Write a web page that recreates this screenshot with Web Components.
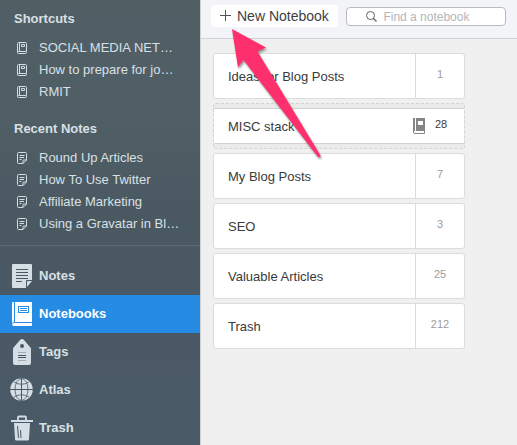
<!DOCTYPE html>
<html lang="en">
<head>
<meta charset="utf-8">
<title>Notebooks</title>
<style>
  body {
    margin: 0;
    font-family: "Liberation Sans", Arial, sans-serif;
    font-size: 13px;
  }
</style>
</head>
<body>
<notes-app>
  <side-bar slot="sidebar">
    <side-section heading="Shortcuts">
      <side-link icon="book">SOCIAL MEDIA NET…</side-link>
      <side-link icon="book">How to prepare for jo…</side-link>
      <side-link icon="book">RMIT</side-link>
    </side-section>
    <side-section heading="Recent Notes">
      <side-link icon="note">Round Up Articles</side-link>
      <side-link icon="note">How To Use Twitter</side-link>
      <side-link icon="note">Affiliate Marketing</side-link>
      <side-link icon="note">Using a Gravatar in Bl…</side-link>
    </side-section>
    <nav-item slot="nav" icon="notes">Notes</nav-item>
    <nav-item slot="nav" icon="notebooks" active>Notebooks</nav-item>
    <nav-item slot="nav" icon="tags">Tags</nav-item>
    <nav-item slot="nav" icon="atlas">Atlas</nav-item>
    <nav-item slot="nav" icon="trash">Trash</nav-item>
  </side-bar>
  <tool-bar placeholder="Find a notebook">New Notebook</tool-bar>
  <notebook-list>
    <notebook-card count="1">Ideas for Blog Posts</notebook-card>
    <notebook-stack count="28">MISC stack</notebook-stack>
    <notebook-card count="7">My Blog Posts</notebook-card>
    <notebook-card count="3">SEO</notebook-card>
    <notebook-card count="25">Valuable Articles</notebook-card>
    <notebook-card count="212">Trash</notebook-card>
  </notebook-list>
  <pointer-arrow slot="overlay"></pointer-arrow>
</notes-app>

<script>
const smallIcons = {
  book: `
    <svg width="10" height="12" viewBox="0 0 10 12" fill="none" stroke="#d3dce2">
      <path d="M9.500 9V1.500q0-1-1-1h-7q-1 0-1 1v9q0 1 1 1h7q1 0 1-1V9.500H1.500q-1 0-1 1M2.500 .5v9"/>
      <path d="M4.500 2.500h3v2h-3z"/>
    </svg>`,
  note: `
    <svg width="10" height="12" viewBox="0 0 10 12" fill="none" stroke="#d3dce2">
      <path d="M6 11.500H1.500q-1 0-1-1v-9q0-1 1-1h7q1 0 1 1V8L6 11.500V8.500q0-.5.5-.5h3"/>
      <path d="M2.500 3.500h5M2.500 5.500h4.500M2.500 7.500h2"/>
    </svg>`
};

const navIcons = {
  notes: `
    <svg width="24" height="26" viewBox="0 0 24 26">
      <path d="M3 1h18q1 0 1 1v15h-5q-1 0-1 1v7H3q-1 0-1-1V2q0-1 1-1z" fill="#d5dee4"/>
      <path d="M17 24v-5q0-1 1-1h4z" fill="#d5dee4"/>
      <path d="M6 6.500h12M6 9.500h12M6 12.500h12M6 15.500h12M6 18.500h6" stroke="#4a5862"/>
    </svg>`,
  notebooks: `
    <svg width="24" height="26" viewBox="0 0 24 26">
      <path d="M3 1h18q1 0 1 1v22q0 1-1 1H4q-2 0-2-2V2q0-1 1-1z" fill="#fff"/>
      <path d="M4.500 1v20.500M2 22.500q1-1 2.500-1H22" fill="none" stroke="#268be3"/>
      <rect x="8.500" y="5.500" width="10" height="6" fill="#fff" stroke="#268be3"/>
      <path d="M10 7.500h7M10 9.500h7" stroke="#268be3"/>
    </svg>`,
  tags: `
    <svg width="24" height="26" viewBox="0 0 24 26">
      <path d="M12 0q1 0 2 1l6 7q1 1 1 2v14q0 2-2 2H5q-2 0-2-2V10q0-1 1-2l6-7q1-1 2-1z" fill="#d5dee4"/>
      <circle cx="12" cy="7" r="2" fill="#4a5862"/>
      <path d="M8 13.500h8M8 21.500h8" stroke="#a0adb6"/>
      <path d="M8 16.500h8M8 18.500h8" stroke="#4a5862"/>
    </svg>`,
  atlas: `
    <svg width="24" height="26" viewBox="0 0 24 26" fill="none">
      <circle cx="11.500" cy="12.500" r="11.300" fill="#d5dee4"/>
      <g stroke="#4a5862">
        <path d="M11.500 1v23M0 12.500h23"/>
        <path d="M4 5q7.500 4.500 15 0M4 20q7.500-4.500 15 0" stroke-width=".8"/>
        <ellipse cx="11.500" cy="12.500" rx="6.500" ry="11" stroke-width=".8"/>
      </g>
    </svg>`,
  trash: `
    <svg width="24" height="26" viewBox="0 0 24 26">
      <path d="M8 5V2.500q0-1 1-1h6q1 0 1 1V5" fill="none" stroke="#d5dee4" stroke-width="1.800"/>
      <path d="M1 5h22v2H1zM4 8h16l-1 16q0 1.500-1.500 1.500h-11Q5 25.500 5 24z" fill="#d5dee4"/>
      <path d="M7.500 11l1 12M10.500 15l.5 8" stroke="#4a5862"/>
    </svg>`
};

class NotesApp extends HTMLElement {
  constructor() {
    super();
    this.attachShadow({ mode: "open" });
  }

  connectedCallback() {
    this.shadowRoot.innerHTML = `
      <style>
        :host {
          display: grid;
          grid-template-columns: 200px 1fr;
          height: 100vh;
        }

        main {
          position: relative;
          min-width: 0;
          border-left: 1px solid #cfd0d2;
          background: #f0f0f0;
        }
      </style>
      <slot name="sidebar"></slot>
      <main>
        <slot></slot>
        <slot name="overlay"></slot>
      </main>
    `;
  }
}

class SideBar extends HTMLElement {
  constructor() {
    super();
    this.attachShadow({ mode: "open" });
  }

  connectedCallback() {
    this.shadowRoot.innerHTML = `
      <style>
        :host {
          display: block;
          overflow: hidden;
          background: linear-gradient(#515f65, #505e65 25%, #4a5862 50%, #4a5a67);
          color: #d8e0e5;
        }

        .sections {
          display: grid;
          gap: 15px;
          padding: 8px 0 10px;
        }

        nav {
          padding-top: 11px;
          border-top: 1px solid #5d6a73;
        }
      </style>
      <div class="sections"><slot></slot></div>
      <nav><slot name="nav"></slot></nav>
    `;
  }
}

class SideSection extends HTMLElement {
  constructor() {
    super();
    this.attachShadow({ mode: "open" });
  }

  connectedCallback() {
    this.shadowRoot.innerHTML = `
      <style>
        :host {
          display: block;
        }

        h2 {
          margin: 0 0 7px;
          padding: 0 14px;
          font-size: 13px;
          line-height: 22px;
        }
      </style>
      <h2>${this.getAttribute("heading")}</h2>
      <slot></slot>
    `;
  }
}

class SideLink extends HTMLElement {
  constructor() {
    super();
    this.attachShadow({ mode: "open" });
  }

  connectedCallback() {
    this.shadowRoot.innerHTML = `
      <style>
        :host {
          display: block;
        }

        a {
          display: flex;
          align-items: center;
          gap: 12px;
          padding-left: 17px;
          color: inherit;
          line-height: 22px;
          text-decoration: none;
          white-space: nowrap;
        }
      </style>
      <a href="#">${smallIcons[this.getAttribute("icon")]}<span><slot></slot></span></a>
    `;
  }
}

class NavItem extends HTMLElement {
  constructor() {
    super();
    this.attachShadow({ mode: "open" });
  }

  connectedCallback() {
    this.shadowRoot.innerHTML = `
      <style>
        :host {
          display: block;
        }

        a {
          display: flex;
          align-items: center;
          gap: 5px;
          padding-left: 10px;
          color: inherit;
          font-weight: bold;
          line-height: 38px;
          text-decoration: none;
        }

        :host([active]) a {
          background: #268be3;
          color: #fff;
        }
      </style>
      <a href="#">${navIcons[this.getAttribute("icon")]}<span><slot></slot></span></a>
    `;
  }
}

class ToolBar extends HTMLElement {
  constructor() {
    super();
    this.attachShadow({ mode: "open" });
  }

  connectedCallback() {
    const placeholder = this.getAttribute("placeholder");
    this.shadowRoot.innerHTML = `
      <style>
        :host {
          display: flex;
          align-items: flex-start;
          gap: 8px;
          padding: 5px 11px 11px 10px;
          border-bottom: 1px solid #d0d1d3;
          background: #f2f4f8;
        }

        button {
          display: flex;
          align-items: center;
          gap: 6px;
          height: 22px;
          padding: 0 9px;
          border: 0;
          border-radius: 4px;
          background: #fff;
          color: #3c3f42;
          font: 14px "Liberation Sans", Arial, sans-serif;
          white-space: nowrap;
        }

        label {
          display: flex;
          flex: 1;
          align-items: center;
          justify-content: center;
          gap: 6px;
          min-width: 0;
          height: 17px;
          margin-top: 2px;
          border: 1px solid #b9bbbe;
          border-radius: 4px;
          background: #fff;
        }

        input {
          width: 102px;
          min-width: 0;
          padding: 0;
          border: 0;
          outline: 0;
          background: none;
          font: 12px "Liberation Sans", Arial, sans-serif;
        }

        input::placeholder {
          color: #b4b6b9;
        }
      </style>
      <button type="button">
        <svg width="11" height="12" viewBox="0 0 11 12" stroke="#505357">
          <path d="M5.500 0v11M0 5.500h11"/>
        </svg>
        <slot></slot>
      </button>
      <label>
        <svg width="11" height="11" viewBox="0 0 11 11" fill="none" stroke="#5c5f63">
          <circle cx="4.500" cy="4.500" r="4"/>
          <path d="M7.500 7.500l3 3" stroke-width="1.300"/>
        </svg>
        <input type="text" placeholder="${placeholder}" aria-label="${placeholder}">
      </label>
    `;
  }
}

class NotebookList extends HTMLElement {
  constructor() {
    super();
    this.attachShadow({ mode: "open" });
  }

  connectedCallback() {
    this.shadowRoot.innerHTML = `
      <style>
        :host {
          display: grid;
          gap: 4px;
          max-width: 252px;
          padding: 14px 12px;
        }
      </style>
      <slot></slot>
    `;
  }
}

class NotebookCard extends HTMLElement {
  constructor() {
    super();
    this.attachShadow({ mode: "open" });
  }

  connectedCallback() {
    this.shadowRoot.innerHTML = `
      <style>
        :host {
          display: grid;
          grid-template-columns: 1fr 49px;
          border: 1px solid #dcdcdc;
          border-radius: 3px;
          background: #fff;
          color: #3a3a3a;
        }

        .name {
          padding: 2px 0 0 14px;
          line-height: 42px;
        }

        .count {
          padding-bottom: 4px;
          border-left: 1px solid #dcdcdc;
          color: #9c9c9c;
          font-size: 11px;
          line-height: 40px;
          text-align: center;
        }
      </style>
      <span class="name"><slot></slot></span>
      <span class="count">${this.getAttribute("count")}</span>
    `;
  }
}

class NotebookStack extends HTMLElement {
  constructor() {
    super();
    this.attachShadow({ mode: "open" });
  }

  connectedCallback() {
    this.shadowRoot.innerHTML = `
      <style>
        :host {
          display: block;
          padding: 4px 0;
          border: 1px dashed #d4d4d4;
          border-radius: 3px;
          background: #ebebeb;
          color: #3a3a3a;
        }

        .sheet {
          display: grid;
          grid-template-columns: 1fr 14px 30px;
          align-items: center;
          padding-right: 8px;
          border: solid #d2d2d2;
          border-width: 1px 0;
          background: #fff;
        }

        .name {
          padding: 2px 0 0 14px;
          line-height: 32px;
        }

        .count {
          padding-bottom: 4px;
          font-size: 11px;
          line-height: 30px;
          text-align: center;
        }
      </style>
      <div class="sheet">
        <span class="name"><slot></slot></span>
        <svg width="14" height="16" viewBox="0 0 14 16">
          <path d="M1 0h2v13H1zM4 0h9v13H4z" fill="#858585"/>
          <path d="M1.500 12v2q0 1.500 1.500 1.500h9.500V13" fill="none" stroke="#858585"/>
          <path d="M6 3h5v4H6z" fill="#fff"/>
        </svg>
        <span class="count">${this.getAttribute("count")}</span>
      </div>
    `;
  }
}

class PointerArrow extends HTMLElement {
  constructor() {
    super();
    this.attachShadow({ mode: "open" });
  }

  connectedCallback() {
    this.shadowRoot.innerHTML = `
      <style>
        :host {
          position: absolute;
          top: 26px;
          left: 28px;
          pointer-events: none;
        }

        svg {
          display: block;
          filter: drop-shadow(1px 2px 1px rgba(0, 0, 0, .4));
        }
      </style>
      <svg width="96" height="136" viewBox="0 0 96 136">
        <path d="M3 3l34 18.500-8.500 4L91.500 129.500q.5 2-2.500 1.500L14.500 34 9 41.500z" fill="#fe2f6d"/>
      </svg>
    `;
  }
}

customElements.define("notes-app", NotesApp);
customElements.define("side-bar", SideBar);
customElements.define("side-section", SideSection);
customElements.define("side-link", SideLink);
customElements.define("nav-item", NavItem);
customElements.define("tool-bar", ToolBar);
customElements.define("notebook-list", NotebookList);
customElements.define("notebook-card", NotebookCard);
customElements.define("notebook-stack", NotebookStack);
customElements.define("pointer-arrow", PointerArrow);
</script>
</body>
</html>
